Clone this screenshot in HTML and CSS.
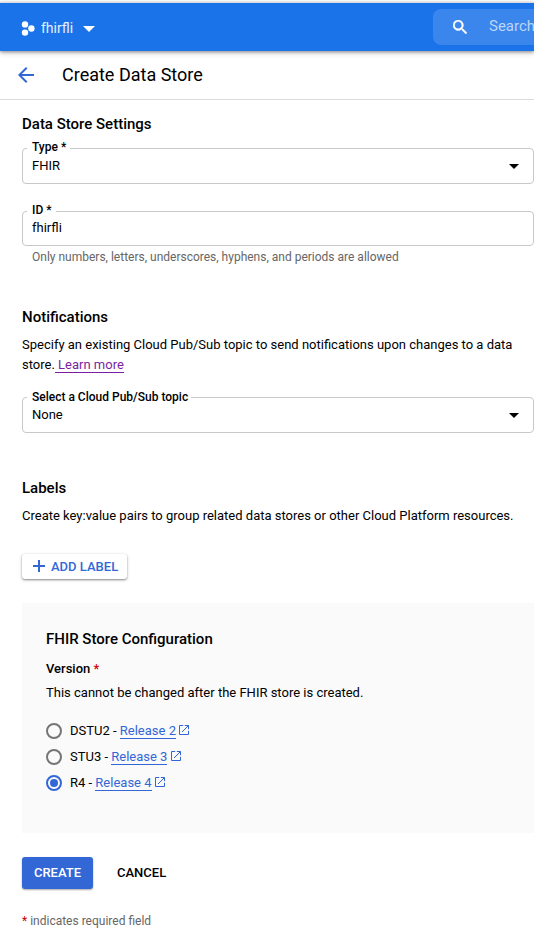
FILE: index.html
```html
<!DOCTYPE html>
<html lang="en">
<head>
<meta charset="utf-8">
<title>Create Data Store</title>
<link rel="stylesheet" href="styles.css">
</head>
<body>
<header class="topbar">
  <div class="project">
    <svg class="project-icon" width="14" height="16" viewBox="0 0 14 16" fill="#fff"><circle cx="4" cy="3.4" r="3.2"/><circle cx="10.4" cy="7.5" r="3.2"/><circle cx="4" cy="11.6" r="3.2"/></svg>
    <span class="project-name">fhirfli</span>
    <svg class="project-caret" width="12" height="6" viewBox="0 0 12 6" fill="#fff"><path d="M0 0h12L6 6z"/></svg>
  </div>
  <div class="search">
    <svg width="14" height="14" viewBox="3 3 17.5 17.5" fill="#fff" stroke="#fff" stroke-width=".6"><path d="M15.5 14h-.79l-.28-.27A6.47 6.47 0 0 0 16 9.5 6.5 6.5 0 1 0 9.5 16c1.61 0 3.09-.59 4.23-1.57l.27.28v.79l5 4.99L20.49 19l-4.99-5zm-6 0C7.01 14 5 11.99 5 9.5S7.01 5 9.5 5 14 7.01 14 9.5 11.99 14 9.5 14z"/></svg>
    <span>Search</span>
  </div>
</header>
<div class="titlebar">
  <svg width="16" height="16" viewBox="4 4 16 16" fill="#3367d6"><path d="M20 11H7.83l5.59-5.59L12 4l-8 8 8 8 1.41-1.41L7.83 13H20v-2z"/></svg>
  <h1>Create Data Store</h1>
</div>
<main>
  <section class="settings">
    <h2>Data Store Settings</h2>
    <div class="field type-field">
      <span class="label">Type *</span>
      <span class="value">FHIR</span>
      <svg class="caret" width="10" height="5" viewBox="0 0 10 5"><path d="M0 0h10L5 5z"/></svg>
    </div>
    <div class="field id-field">
      <span class="label">ID *</span>
      <span class="value">fhirfli</span>
    </div>
    <p class="hint">Only numbers, letters, underscores, hyphens, and periods are allowed</p>
  </section>
  <section class="notifications">
    <h2>Notifications</h2>
    <p>Specify an existing Cloud Pub/Sub topic to send notifications upon changes to a data<br>store.<a class="visited" href="#">&nbsp;Learn more</a></p>
    <div class="field topic-field">
      <span class="label">Select a Cloud Pub/Sub topic</span>
      <span class="value">None</span>
      <svg class="caret" width="10" height="5" viewBox="0 0 10 5"><path d="M0 0h10L5 5z"/></svg>
    </div>
  </section>
  <section class="labels">
    <h2>Labels</h2>
    <p>Create key:value pairs to group related data stores or other Cloud Platform resources.</p>
    <button class="add"><svg width="12" height="12" viewBox="0 0 12 12" fill="#3367d6"><path d="M5 0h2v5h5v2H7v5H5V7H0V5h5z"/></svg>ADD LABEL</button>
  </section>
  <section class="config">
    <h2>FHIR Store Configuration</h2>
    <h3>Version <span class="required">*</span></h3>
    <p>This cannot be changed after the FHIR store is created.</p>
    <div class="options">
      <div class="option"><span class="radio"></span><span>DSTU2 - <a href="#">Release 2</a></span><svg class="external" width="10" height="10" viewBox="0 0 10 10"><path d="M4.2.5H.5v9h9V5.8M5.8.5h3.7v3.7M9.5.5L3 7"/></svg></div>
      <div class="option"><span class="radio"></span><span>STU3 - <a href="#">Release 3</a></span><svg class="external" width="10" height="10" viewBox="0 0 10 10"><path d="M4.2.5H.5v9h9V5.8M5.8.5h3.7v3.7M9.5.5L3 7"/></svg></div>
      <div class="option"><span class="radio checked"></span><span>R4 - <a href="#">Release 4</a></span><svg class="external" width="10" height="10" viewBox="0 0 10 10"><path d="M4.2.5H.5v9h9V5.8M5.8.5h3.7v3.7M9.5.5L3 7"/></svg></div>
    </div>
  </section>
  <div class="actions">
    <button class="create">CREATE</button>
    <button class="cancel">CANCEL</button>
  </div>
  <p class="footnote"><span class="required">*</span> indicates required field</p>
</main>
</body>
</html>
```
FILE: styles.css
```css
* { box-sizing: border-box; }
html { overflow: hidden; }
body {
  margin: 0;
  padding-top: 2px;
  background: #fff;
  color: #000;
  font: 13px/20px Roboto, "Liberation Sans", sans-serif;
}
h1, h2, h3, p { margin: 0; }
svg { display: block; flex: none; }
.topbar {
  position: relative;
  display: flex;
  justify-content: space-between;
  height: 49px;
  border-top: 1px solid #dadce0;
  background: #1a73e8;
  box-shadow: 0 1px 3px rgba(0,0,0,.35), 0 2px 6px rgba(0,0,0,.18);
}
.project { display: flex; align-items: center; padding: 3px 0 0 21px; color: #e8f0fe; }
.project-icon { margin-right: 6px; }
.project-name { font-size: 14px; margin: -2px 10px 0 0; }
.search {
  display: flex;
  align-items: center;
  width: 101px;
  height: 36px;
  margin-top: 6px;
  padding-left: 20px;
  gap: 22px;
  overflow: hidden;
  border-radius: 8px 0 0 8px;
  background: #3b86ec;
  color: #bbd5f9;
  font-size: 15px;
}
.search span { position: relative; top: -1px; }
.titlebar {
  display: flex;
  align-items: center;
  gap: 28px;
  height: 49px;
  padding-left: 18px;
  border-bottom: 1px solid #dadce0;
}
h1 { font-size: 18px; font-weight: 400; line-height: 24px; }
main { padding: 14px 0 0 22px; }
h2 { font-size: 15px; font-weight: 500; line-height: 20px; }
h3 { font-size: 13px; font-weight: 500; line-height: 20px; }
.field {
  position: relative;
  display: flex;
  align-items: center;
  justify-content: space-between;
  height: 36px;
  padding: 0 14px 0 10px;
  border: 1px solid #c8c8c8;
  border-radius: 4px;
}
.field .value { margin-left: -1px; }
.label {
  position: absolute;
  left: 4px;
  top: -10px;
  padding: 0 4px 0 5px;
  background: #fff;
  font-size: 12px;
  font-weight: 500;
  line-height: 16px;
}
.type-field { margin-top: 14px; }
.id-field { height: 35px; margin-top: 27px; padding-bottom: 1px; }
.hint { margin: 1px 0 0 10px; color: #666; font-size: 12px; }
.notifications { margin-top: 40px; }
.notifications p { margin-top: 8px; }
.topic-field { margin-top: 22px; }
.topic-field .label { top: -9px; padding-right: 3px; }
.labels { margin-top: 45px; }
.labels p { margin-top: 8px; }
a { color: #3367d6; text-decoration: none; border-bottom: 1px solid; }
.visited { color: #7b1fa2; }
button { display: flex; align-items: center; border: 0; font: 500 13px/16px Roboto, "Liberation Sans", sans-serif; }
.add {
  width: 105px;
  height: 25px;
  margin-top: 28px;
  padding: 0 0 0 11px;
  gap: 6px;
  border-radius: 3px;
  background: #fff;
  color: #3367d6;
  white-space: nowrap;
  box-shadow: 0 1px 2px rgba(0,0,0,.4), 0 1px 4px rgba(0,0,0,.12);
}
.add svg { margin-top: -1px; }
.config { height: 230px; margin-top: 24px; padding: 26px 24px 0; background: #fafafa; }
.config h3 { margin-top: 10px; }
.config p { margin-top: 4px; }
.required { color: #d50000; }
.options { margin-top: 15px; }
.option { display: flex; align-items: center; height: 26px; }
.radio { display: flex; align-items: center; justify-content: center; width: 16px; height: 16px; margin-right: 8px; border: 2px solid #757575; border-radius: 50%; }
.checked { border-color: #3367d6; }
.checked::before { content: ""; width: 8px; height: 8px; border-radius: 50%; background: #3367d6; }
.external { margin: -2px 0 0 3.2px; fill: none; stroke: #3367d6; stroke-width: 1; }
.actions { display: flex; margin-top: 24px; }
.create { width: 71px; height: 32px; justify-content: center; padding: 0; border-radius: 3px; background: #3367d6; color: #fff; box-shadow: 0 1px 2px rgba(0,0,0,.35); }
.cancel { margin-left: 24px; padding: 0; background: none; color: #000; }
.footnote { margin-top: 22px; color: #666; font-size: 12px; }
```
